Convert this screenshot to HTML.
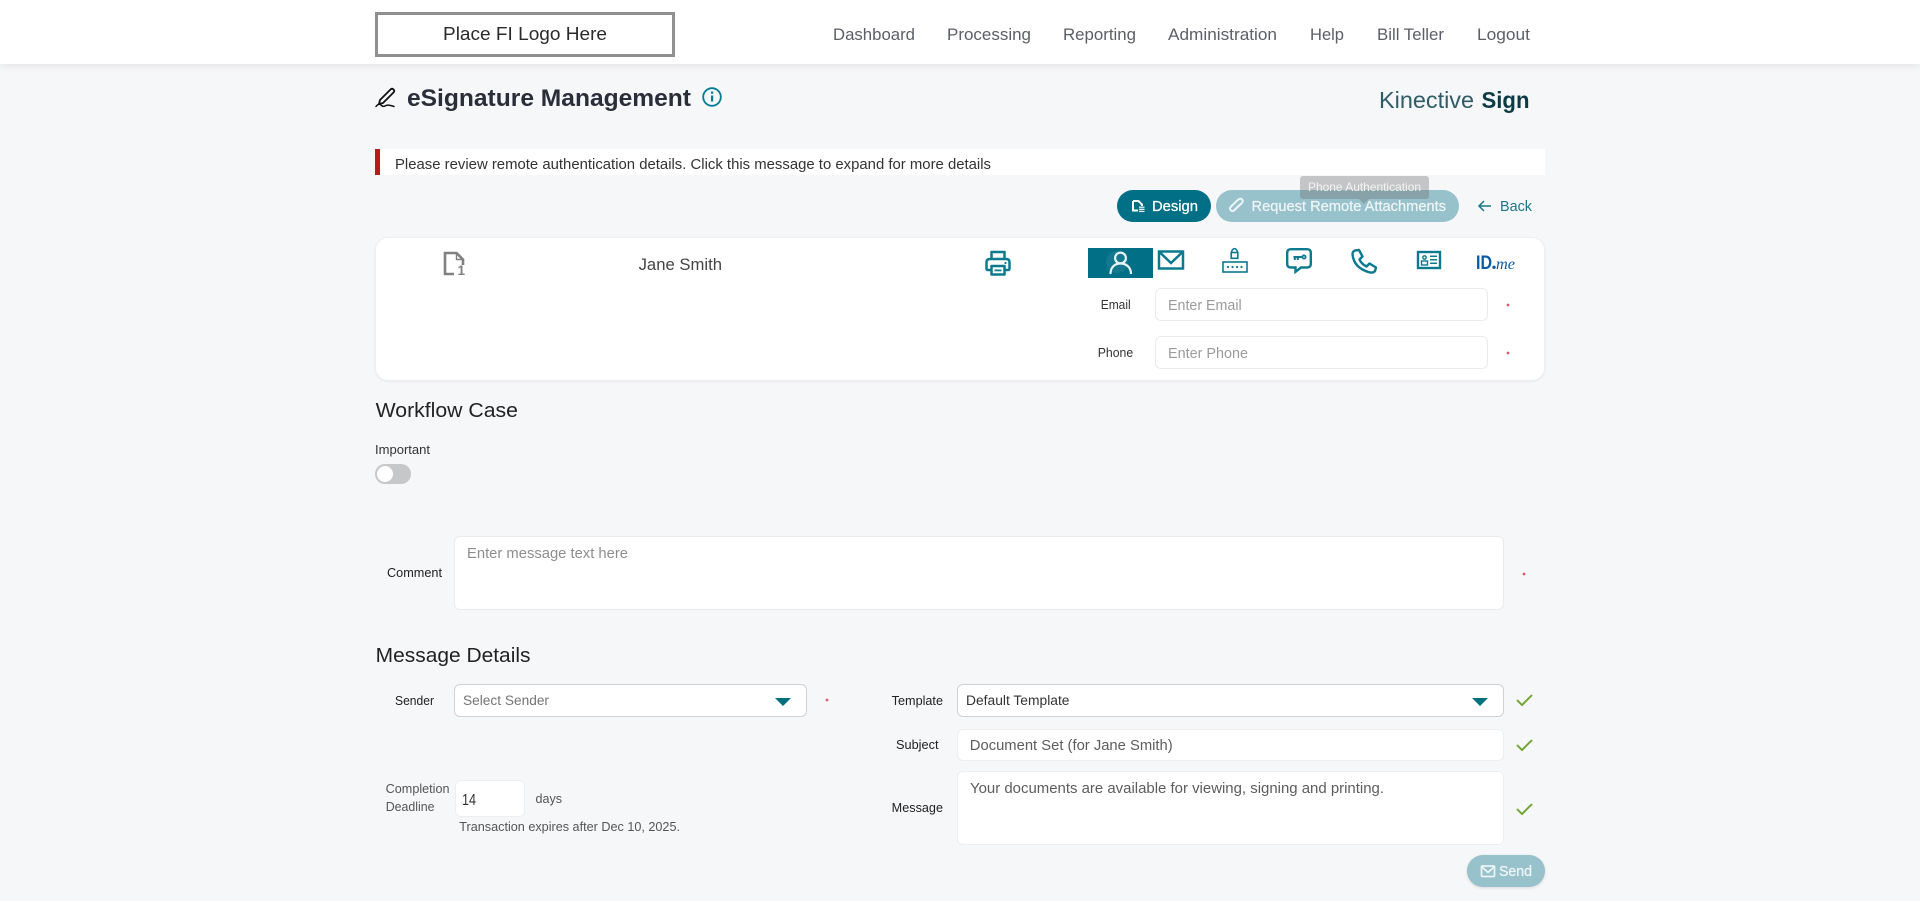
<!DOCTYPE html>
<html lang="en">
<head>
<meta charset="utf-8">
<title>eSignature Management</title>
<style>
html,body{margin:0;padding:0;width:1920px;height:901px;overflow:hidden;background:#f6f7f9;font-family:"Liberation Sans",sans-serif}
.b{position:absolute;box-sizing:border-box}
svg#t{position:absolute;left:0;top:0;width:1920px;height:901px}
svg#t text{font-family:"Liberation Sans",sans-serif}
</style>
</head>
<body>
<div class="b" style="left:0;top:0;width:1920px;height:64px;background:#fff;box-shadow:0 2px 8px rgba(0,0,0,.08)"></div>
<div class="b" style="left:375px;top:12px;width:300px;height:45px;border:3px solid #909090;background:#fff"></div>
<div class="b" style="left:375px;top:149px;width:1170px;height:26px;background:#fff"></div>
<div class="b" style="left:375px;top:149px;width:5px;height:26px;background:#b71c1c"></div>
<div class="b" style="left:1117px;top:190px;width:94px;height:32px;border-radius:16px;background:#016f86"></div>
<div class="b" style="left:1216px;top:190px;width:243px;height:32px;border-radius:16px;background:#97c1cb"></div>
<div class="b" style="left:375px;top:237px;width:1170px;height:144px;border-radius:13px;background:#fff;border:1px solid #eceef0;box-shadow:0 1px 2px rgba(0,0,0,.05)"></div>
<div class="b" style="left:1088px;top:248px;width:65px;height:30px;background:#016f86"></div>
<div class="b" style="left:1155px;top:288px;width:333px;height:33px;border-radius:6px;background:#fff;border:1px solid #e9ebed"></div>
<div class="b" style="left:1155px;top:336px;width:333px;height:33px;border-radius:6px;background:#fff;border:1px solid #e9ebed"></div>
<div class="b" style="left:375px;top:464px;width:36px;height:20px;border-radius:10px;background:#c6c7c9"></div>
<div class="b" style="left:377px;top:466px;width:16px;height:16px;border-radius:50%;background:#fff"></div>
<div class="b" style="left:454px;top:536px;width:1050px;height:74px;border-radius:6px;background:#fff;border:1px solid #e9ebed"></div>
<div class="b" style="left:454px;top:684px;width:353px;height:33px;border-radius:6px;background:#fff;border:1px solid #cfd1d3"></div>
<div class="b" style="left:957px;top:684px;width:547px;height:33px;border-radius:6px;background:#fff;border:1px solid #cfd1d3"></div>
<div class="b" style="left:957px;top:729px;width:547px;height:32px;border-radius:6px;background:#fff;border:1px solid #eceef0"></div>
<div class="b" style="left:957px;top:771px;width:547px;height:74px;border-radius:6px;background:#fff;border:1px solid #eceef0"></div>
<div class="b" style="left:455px;top:780px;width:70px;height:37px;border-radius:6px;background:#fff;border:1px solid #eceef0"></div>
<div class="b" style="left:1467px;top:855px;width:78px;height:32px;border-radius:16px;background:#97c1cb;box-shadow:0 1px 3px rgba(0,0,0,.12)"></div>

<svg id="t" viewBox="0 0 1920 901" xmlns="http://www.w3.org/2000/svg">
<text x="443" y="40" font-size="18" fill="#2a2a2a" textLength="164" lengthAdjust="spacingAndGlyphs">Place FI Logo Here</text>
<g font-size="16.5" fill="#5c5f66">
<text x="833" y="40" textLength="82" lengthAdjust="spacingAndGlyphs">Dashboard</text>
<text x="947" y="40" textLength="84" lengthAdjust="spacingAndGlyphs">Processing</text>
<text x="1063" y="40" textLength="73" lengthAdjust="spacingAndGlyphs">Reporting</text>
<text x="1168" y="40" textLength="109" lengthAdjust="spacingAndGlyphs">Administration</text>
<text x="1310" y="40" textLength="34" lengthAdjust="spacingAndGlyphs">Help</text>
<text x="1377" y="40" textLength="67" lengthAdjust="spacingAndGlyphs">Bill Teller</text>
<text x="1477" y="40" textLength="53" lengthAdjust="spacingAndGlyphs">Logout</text>
</g>
<text x="407" y="106" font-size="24" font-weight="700" fill="#2b2d38" textLength="284" lengthAdjust="spacingAndGlyphs">eSignature Management</text>
<text x="1379" y="108" font-size="23" fill="#2f5c66" textLength="95" lengthAdjust="spacingAndGlyphs">Kinective</text>
<text x="1481.5" y="108" font-size="23" font-weight="700" fill="#0b3b45" textLength="48" lengthAdjust="spacingAndGlyphs">Sign</text>
<text x="395" y="169" font-size="14.5" fill="#333" textLength="596" lengthAdjust="spacingAndGlyphs">Please review remote authentication details. Click this message to expand for more details</text>
<text x="1152" y="211" font-size="14.5" fill="#fff" stroke="#fff" stroke-width=".25" textLength="46" lengthAdjust="spacingAndGlyphs">Design</text>
<text x="1251.5" y="211" font-size="14.5" fill="#eef5f6" stroke="#eef5f6" stroke-width=".25" textLength="194.5" lengthAdjust="spacingAndGlyphs">Request Remote Attachments</text>
<text x="1500" y="211" font-size="14.5" fill="#1a7689" textLength="32" lengthAdjust="spacingAndGlyphs">Back</text>
<text x="638.6" y="270" font-size="16.5" fill="#444" textLength="83.4" lengthAdjust="spacingAndGlyphs">Jane Smith</text>
<text x="1100.7" y="309" font-size="12.5" fill="#333" textLength="30" lengthAdjust="spacingAndGlyphs">Email</text>
<text x="1097.7" y="357" font-size="12.5" fill="#333" textLength="35.5" lengthAdjust="spacingAndGlyphs">Phone</text>
<text x="1168" y="310" font-size="14.5" fill="#9b9b9b" textLength="73.7" lengthAdjust="spacingAndGlyphs">Enter Email</text>
<text x="1168" y="358" font-size="14.5" fill="#9b9b9b" textLength="80" lengthAdjust="spacingAndGlyphs">Enter Phone</text>
<text x="375.6" y="417" font-size="20.5" fill="#222" textLength="142.4" lengthAdjust="spacingAndGlyphs">Workflow Case</text>
<text x="375" y="454" font-size="12.5" fill="#333" textLength="55" lengthAdjust="spacingAndGlyphs">Important</text>
<text x="387" y="577" font-size="12.5" fill="#222" textLength="55" lengthAdjust="spacingAndGlyphs">Comment</text>
<text x="467" y="558" font-size="14.5" fill="#8d8d8d" textLength="161" lengthAdjust="spacingAndGlyphs">Enter message text here</text>
<text x="375.7" y="662" font-size="20.5" fill="#222" textLength="154.8" lengthAdjust="spacingAndGlyphs">Message Details</text>
<text x="395" y="705" font-size="12.5" fill="#222" textLength="39" lengthAdjust="spacingAndGlyphs">Sender</text>
<text x="463" y="705" font-size="13.5" fill="#757575" textLength="86" lengthAdjust="spacingAndGlyphs">Select Sender</text>
<text x="385.7" y="793" font-size="12.5" fill="#555" textLength="63.8" lengthAdjust="spacingAndGlyphs">Completion</text>
<text x="385.7" y="811" font-size="12.5" fill="#555" textLength="48.8" lengthAdjust="spacingAndGlyphs">Deadline</text>
<text x="462" y="805" font-size="16" fill="#333" textLength="14" lengthAdjust="spacingAndGlyphs">14</text>
<text x="535.5" y="803" font-size="12.5" fill="#555" textLength="26.5" lengthAdjust="spacingAndGlyphs">days</text>
<text x="459.3" y="831" font-size="13" fill="#555" textLength="220.7" lengthAdjust="spacingAndGlyphs">Transaction expires after Dec 10, 2025.</text>
<text x="891.7" y="705" font-size="12.5" fill="#222" textLength="51.3" lengthAdjust="spacingAndGlyphs">Template</text>
<text x="966" y="705" font-size="13.5" fill="#333" textLength="103.5" lengthAdjust="spacingAndGlyphs">Default Template</text>
<text x="896" y="749" font-size="12.5" fill="#222" textLength="42.5" lengthAdjust="spacingAndGlyphs">Subject</text>
<text x="969.8" y="750" font-size="14.5" fill="#5d5d5d" textLength="202.9" lengthAdjust="spacingAndGlyphs">Document Set (for Jane Smith)</text>
<text x="891.7" y="812" font-size="12.5" fill="#222" textLength="51.3" lengthAdjust="spacingAndGlyphs">Message</text>
<text x="970" y="793" font-size="14.5" fill="#5d5d5d" textLength="414" lengthAdjust="spacingAndGlyphs">Your documents are available for viewing, signing and printing.</text>
<text x="1499" y="876" font-size="14.5" fill="#eef5f6" stroke="#eef5f6" stroke-width=".3" textLength="33" lengthAdjust="spacingAndGlyphs">Send</text>

<!-- sign icon -->
<g fill="none" stroke="#111" stroke-linecap="round" stroke-linejoin="round">
<path d="M380 100 L390.5 89.5 Q392 88 393.5 89.5 Q395 91 393.5 92.5 L383 103 L379 104 Z" stroke-width="1.8"/>
<path d="M376 106.5 Q378.5 103 381 105 Q383 107.5 386 105.5 Q388 104.5 394 106.5" stroke-width="1.5"/>
</g>
<!-- info icon -->
<circle cx="712" cy="97" r="8.8" fill="none" stroke="#017c92" stroke-width="1.8"/>
<rect x="711" y="95.5" width="2.2" height="6" fill="#017c92"/>
<rect x="711" y="91.5" width="2.2" height="2.2" fill="#017c92"/>

<!-- design icon -->
<path d="M1133 201 H1138.5 L1142 204.5 V206 M1133 201 V210.5 H1138" fill="none" stroke="#fff" stroke-width="2"/>
<rect x="1139" y="206.5" width="5.5" height="1.4" fill="#d9e8ec"/><rect x="1139" y="208.6" width="5.5" height="1.4" fill="#d9e8ec"/><rect x="1139" y="210.7" width="5.5" height="1.4" fill="#d9e8ec"/>
<!-- paperclip -->
<g fill="none" stroke="#eef5f6" stroke-width="2" stroke-linecap="round" stroke-linejoin="round">
<path d="M1240 204.5 L1234.5 210 Q1232.5 212 1230.8 210.3 Q1229 208.5 1231 206.5 L1238 199.8 Q1240.5 197.8 1242 199.3 Q1243.7 201 1241.5 203.5 L1235.5 209"/>
</g>
<!-- back arrow -->
<g fill="none" stroke="#1a7689" stroke-width="1.5"><path d="M1479 206 H1491"/><path d="M1484 201 L1479 206 L1484 211"/></g>

<!-- tooltip -->
<rect x="1300" y="176" width="129" height="23" rx="3" fill="#6b6b6b" fill-opacity=".36"/>
<path d="M1359 199 L1364 204 L1369 199 Z" fill="#6b6b6b" fill-opacity=".36"/>
<text x="1308" y="191" font-size="12" fill="#f3f3f3" textLength="113" lengthAdjust="spacingAndGlyphs">Phone Authentication</text>

<!-- doc icon -->
<g fill="none" stroke="#808080">
<path d="M454 274 H445 V253 H456.5 L463 259.5 V265" stroke-width="2.6"/>
<path d="M456.5 253 V259.5 H463" stroke-width="1.4"/>
</g>
<text x="457.5" y="275" font-size="13.5" font-weight="700" fill="#808080">1</text>
<!-- printer -->
<g fill="none" stroke="#0b7a8f" stroke-width="2.5" stroke-linejoin="round">
<path d="M991.5 259 V252 H1004.5 V259"/>
<path d="M991.5 270 H988 Q986.5 270 986.5 268.5 V262 Q986.5 259 990 259 H1006 Q1009.5 259 1009.5 262 V268.5 Q1009.5 270 1008 270 H1004.5"/>
<rect x="991.5" y="266" width="13" height="8.5"/>
</g>
<rect x="994.5" y="269.5" width="7" height="1.8" fill="#0b7a8f"/>
<circle cx="1005.5" cy="263" r="1.1" fill="#0b7a8f"/>

<!-- user icon -->
<circle cx="1117" cy="262" r="11" fill="#fff" fill-opacity=".07"/>
<g fill="none" stroke="#e9f3f5" stroke-width="2.2">
<circle cx="1120.5" cy="258" r="5.4"/>
<path d="M1110.5 274 C1110.5 267 1115 263.5 1120.5 263.5 C1126 263.5 1131 267 1131 274"/>
</g>
<!-- mail -->
<g fill="none" stroke="#0b7a8f" stroke-width="2.5">
<rect x="1159" y="251.5" width="24" height="17"/>
<path d="M1160 252.5 L1171 263 L1182 252.5"/>
</g>
<!-- lock keypad -->
<g fill="none" stroke="#0b7a8f">
<rect x="1231.2" y="252.5" width="6.6" height="5.8" stroke-width="1.6"/>
<path d="M1231.8 252 V250.8 Q1234.5 246.5 1237.2 250.8 V252" stroke-width="1.5"/>
<rect x="1223" y="262" width="24" height="10" stroke-width="1.6"/>
</g>
<g fill="#0b7a8f"><circle cx="1228" cy="267" r="1.1"/><circle cx="1232.5" cy="267" r="1.1"/><circle cx="1237" cy="267" r="1.1"/><circle cx="1241.5" cy="267" r="1.1"/></g>
<!-- chat key -->
<path d="M1291 249.2 H1307 Q1310.8 249.2 1310.8 253 V264 Q1310.8 267.5 1307 267.5 H1301 L1295.5 271.8 V267.5 H1291 Q1287.2 267.5 1287.2 264 V253 Q1287.2 249.2 1291 249.2 Z" fill="none" stroke="#0b7a8f" stroke-width="2.4"/>
<circle cx="1304" cy="257" r="2.2" fill="#0b7a8f" stroke="#0b7a8f" stroke-width=".6"/>
<circle cx="1304" cy="257" r=".8" fill="#fff"/>
<path d="M1293.5 257 H1302 M1294.8 257 V260 M1297.8 257 V260" stroke="#0b7a8f" stroke-width="2" fill="none"/>
<!-- phone -->
<path d="M1355 250.5 L1359 250 L1362.5 256.5 L1359.5 259.5 Q1361.5 264 1366.5 266.5 L1369.5 263.5 L1376 267.5 L1375 271 Q1373.5 273 1370 272.5 Q1353.5 268 1352.5 254 Q1352.5 251.5 1355 250.5 Z" fill="none" stroke="#0b7a8f" stroke-width="2.4" stroke-linejoin="round"/>
<!-- id card -->
<rect x="1418" y="252" width="22" height="16" fill="none" stroke="#0b7a8f" stroke-width="2.4"/>
<g fill="none" stroke="#0b7a8f" stroke-width="1.4">
<circle cx="1424.5" cy="257.5" r="1.7"/>
<rect x="1421.5" y="261" width="6" height="4"/>
</g>
<g fill="#0b7a8f">
<rect x="1430" y="255.5" width="7" height="1.5"/><rect x="1430" y="259" width="7" height="1.5"/><rect x="1430" y="262.5" width="7" height="1.5"/>
</g>
<!-- ID.me -->
<text x="1476" y="269" font-size="19.5" font-weight="700" fill="#0a5aa8" textLength="16" lengthAdjust="spacingAndGlyphs">ID</text>
<circle cx="1494" cy="267.3" r="1.7" fill="#0a5aa8"/>
<text x="1496" y="269" font-size="16" font-style="italic" style="font-family:'Liberation Serif',serif" fill="#0a5aa8" textLength="19" lengthAdjust="spacingAndGlyphs">me</text>

<!-- red dots -->
<g fill="#e2596b">
<circle cx="1508" cy="305" r="1.4"/><circle cx="1508" cy="353" r="1.4"/><circle cx="1524" cy="574" r="1.4"/><circle cx="827" cy="700" r="1.4"/>
</g>
<!-- select arrows -->
<path d="M775 698 H791 L783 706 Z" fill="#016f7e"/>
<path d="M1472 698 H1488 L1480 706 Z" fill="#016f7e"/>
<!-- checks -->
<g fill="none" stroke="#6ea42e" stroke-width="1.9">
<path d="M1517 700 L1522 705 L1532 695"/>
<path d="M1517 745 L1522 750 L1532 740"/>
<path d="M1517 809 L1522 814 L1532 804"/>
</g>
<!-- send icon -->
<g fill="none" stroke="#eef5f6" stroke-width="1.7">
<rect x="1481.5" y="866" width="13" height="10.5" rx="1"/>
<path d="M1482 867 L1488 872.5 L1494 867"/>
</g>
</svg>
</body>
</html>
